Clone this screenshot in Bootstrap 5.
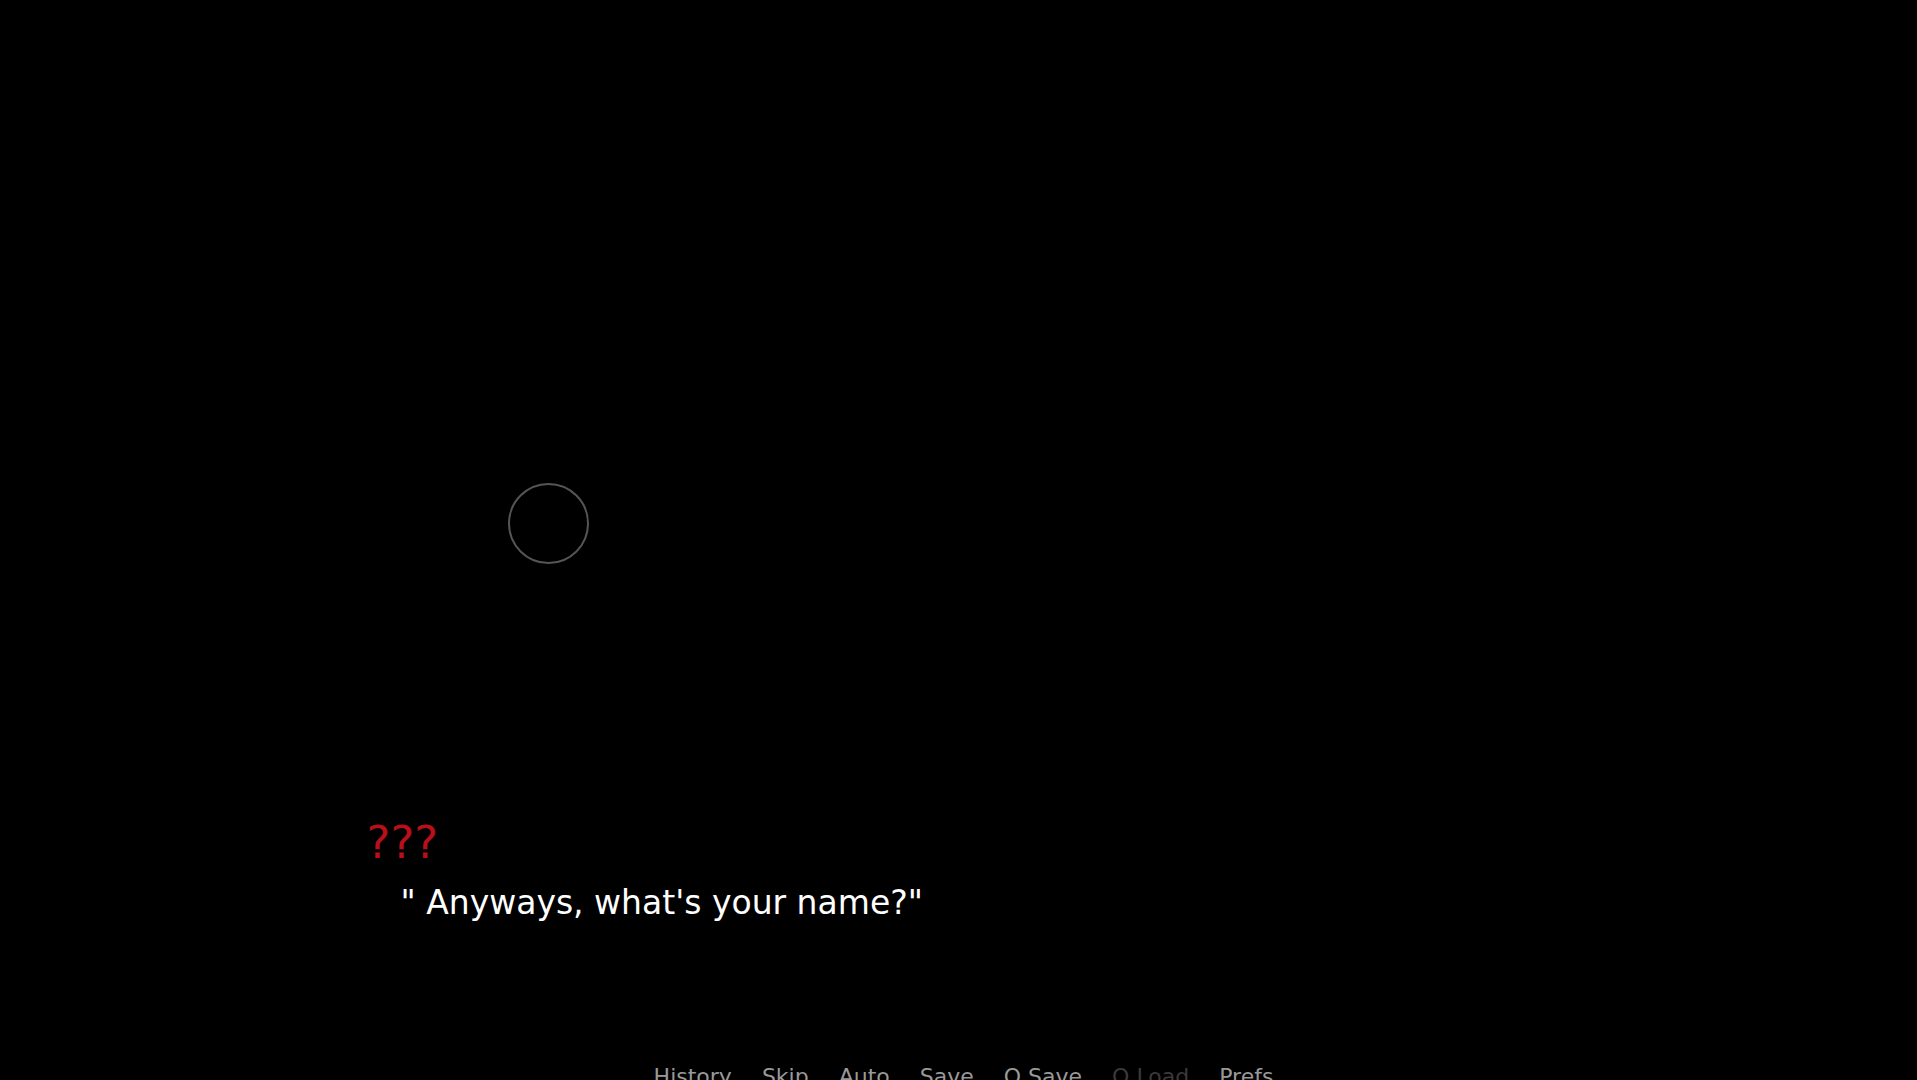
<!DOCTYPE html>
<html lang="en">
<head>
  <meta charset="UTF-8">
  <meta name="viewport" content="width=device-width, initial-scale=1.0">
  <title>Visual Novel</title>
  <link href="https://cdn.jsdelivr.net/npm/bootstrap@5.3.0/dist/css/bootstrap.min.css" rel="stylesheet">
  <script src="https://cdn.jsdelivr.net/npm/bootstrap@5.3.0/dist/js/bootstrap.bundle.min.js"></script>
  <style>
    body {
      background: #000;
      color: #fff;
      font-family: "DejaVu Sans", sans-serif;
    }
    .touch-ring {
      position: absolute;
      left: 508px;
      top: 483px;
      width: 81px;
      height: 81px;
      border: 2px solid #555;
    }
    .say-window {
      max-width: 1184px;
      min-height: 247px;
    }
    .speaker {
      margin-bottom: 14px;
      color: #b8101a;
      font-size: 45px;
      line-height: 52px;
    }
    .dialogue {
      padding-left: 34px;
      font-size: 33px;
      line-height: 40px;
    }
    /* The menu row runs past the bottom edge of the stage */
    .quick-menu {
      gap: 30px;
      height: 16px;
      padding-left: 10px;
    }
    .quick-menu .btn {
      color: #999;
      font-size: 22px;
      line-height: 26px;
    }
    .quick-menu .btn:hover {
      color: #fff;
    }
    .quick-menu .btn:disabled {
      color: #3a3a3a;
      opacity: 1;
    }
  </style>
</head>
<body>

<main class="vh-100 position-relative overflow-hidden d-flex flex-column justify-content-end align-items-center">
  <div class="touch-ring rounded-circle"></div>

  <!-- Dialogue -->
  <section class="say-window w-100">
    <h1 class="speaker fw-normal">???</h1>
    <p class="dialogue mb-0">" Anyways, what's your name?"</p>
  </section>

  <!-- Quick menu -->
  <nav class="quick-menu d-flex align-items-start">
    <button type="button" class="btn border-0 p-0">History</button>
    <button type="button" class="btn border-0 p-0">Skip</button>
    <button type="button" class="btn border-0 p-0">Auto</button>
    <button type="button" class="btn border-0 p-0">Save</button>
    <button type="button" class="btn border-0 p-0">Q.Save</button>
    <button type="button" class="btn border-0 p-0" disabled>Q.Load</button>
    <button type="button" class="btn border-0 p-0">Prefs</button>
  </nav>
</main>

</body>
</html>
